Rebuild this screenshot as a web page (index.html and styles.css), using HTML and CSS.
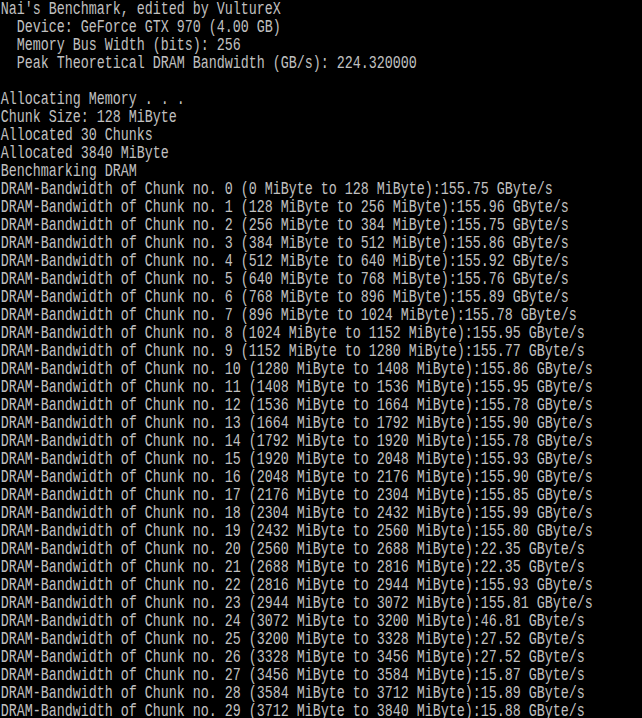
FILE: index.html
```html
<!DOCTYPE html>
<html>
<head>
<meta charset="utf-8">
<link rel="stylesheet" href="styles.css">
</head>
<body class="console">
<pre class="output">Nai's Benchmark, edited by VultureX
  Device: GeForce GTX 970 (4.00 GB)
  Memory Bus Width (bits): 256
  Peak Theoretical DRAM Bandwidth (GB/s): 224.320000

Allocating Memory . . .
Chunk Size: 128 MiByte
Allocated 30 Chunks
Allocated 3840 MiByte
Benchmarking DRAM
DRAM-Bandwidth of Chunk no. 0 (0 MiByte to 128 MiByte):155.75 GByte/s
DRAM-Bandwidth of Chunk no. 1 (128 MiByte to 256 MiByte):155.96 GByte/s
DRAM-Bandwidth of Chunk no. 2 (256 MiByte to 384 MiByte):155.75 GByte/s
DRAM-Bandwidth of Chunk no. 3 (384 MiByte to 512 MiByte):155.86 GByte/s
DRAM-Bandwidth of Chunk no. 4 (512 MiByte to 640 MiByte):155.92 GByte/s
DRAM-Bandwidth of Chunk no. 5 (640 MiByte to 768 MiByte):155.76 GByte/s
DRAM-Bandwidth of Chunk no. 6 (768 MiByte to 896 MiByte):155.89 GByte/s
DRAM-Bandwidth of Chunk no. 7 (896 MiByte to 1024 MiByte):155.78 GByte/s
DRAM-Bandwidth of Chunk no. 8 (1024 MiByte to 1152 MiByte):155.95 GByte/s
DRAM-Bandwidth of Chunk no. 9 (1152 MiByte to 1280 MiByte):155.77 GByte/s
DRAM-Bandwidth of Chunk no. 10 (1280 MiByte to 1408 MiByte):155.86 GByte/s
DRAM-Bandwidth of Chunk no. 11 (1408 MiByte to 1536 MiByte):155.95 GByte/s
DRAM-Bandwidth of Chunk no. 12 (1536 MiByte to 1664 MiByte):155.78 GByte/s
DRAM-Bandwidth of Chunk no. 13 (1664 MiByte to 1792 MiByte):155.90 GByte/s
DRAM-Bandwidth of Chunk no. 14 (1792 MiByte to 1920 MiByte):155.78 GByte/s
DRAM-Bandwidth of Chunk no. 15 (1920 MiByte to 2048 MiByte):155.93 GByte/s
DRAM-Bandwidth of Chunk no. 16 (2048 MiByte to 2176 MiByte):155.90 GByte/s
DRAM-Bandwidth of Chunk no. 17 (2176 MiByte to 2304 MiByte):155.85 GByte/s
DRAM-Bandwidth of Chunk no. 18 (2304 MiByte to 2432 MiByte):155.99 GByte/s
DRAM-Bandwidth of Chunk no. 19 (2432 MiByte to 2560 MiByte):155.80 GByte/s
DRAM-Bandwidth of Chunk no. 20 (2560 MiByte to 2688 MiByte):22.35 GByte/s
DRAM-Bandwidth of Chunk no. 21 (2688 MiByte to 2816 MiByte):22.35 GByte/s
DRAM-Bandwidth of Chunk no. 22 (2816 MiByte to 2944 MiByte):155.93 GByte/s
DRAM-Bandwidth of Chunk no. 23 (2944 MiByte to 3072 MiByte):155.81 GByte/s
DRAM-Bandwidth of Chunk no. 24 (3072 MiByte to 3200 MiByte):46.81 GByte/s
DRAM-Bandwidth of Chunk no. 25 (3200 MiByte to 3328 MiByte):27.52 GByte/s
DRAM-Bandwidth of Chunk no. 26 (3328 MiByte to 3456 MiByte):27.52 GByte/s
DRAM-Bandwidth of Chunk no. 27 (3456 MiByte to 3584 MiByte):15.87 GByte/s
DRAM-Bandwidth of Chunk no. 28 (3584 MiByte to 3712 MiByte):15.89 GByte/s
DRAM-Bandwidth of Chunk no. 29 (3712 MiByte to 3840 MiByte):15.88 GByte/s</pre>
</body>
</html>
```
FILE: styles.css
```css
html, body {
  margin: 0;
  padding: 0;
  background: #000;
  overflow: hidden;
  height: 718px;
}
.console {
  width: 642px;
}
.output {
  margin: 0;
  padding: 0 0 0 1px;
  color: #c0c0c0;
  font-family: "Liberation Mono", monospace;
  font-size: 19px;
  line-height: 18px;
  white-space: pre;
  width: 915px;
  transform: scaleX(0.7018);
  transform-origin: left top;
}
```
